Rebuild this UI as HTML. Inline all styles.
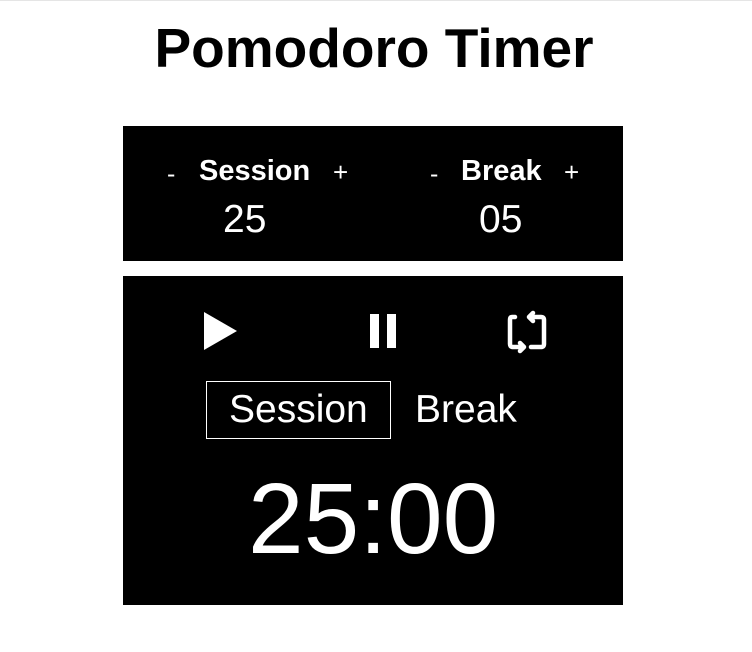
<!DOCTYPE html>
<html><head><meta charset="utf-8"><style>
body{margin:0;width:752px;height:652px;background:#fff;font-family:"Liberation Sans",Arial,sans-serif;position:relative;overflow:hidden}
.a{position:absolute;white-space:nowrap;line-height:1}
.box{position:absolute;background:#000;left:123px;width:500px}
.w{color:#fff}
</style></head><body>
<div style="position:absolute;top:0;left:0;width:752px;height:1px;background:#e5e5e5"></div>
<div class="a" style="left:0;width:748px;text-align:center;top:21px;font-size:55px;font-weight:bold">Pomodoro Timer</div>
<div class="box" style="top:126px;height:135px"></div>
<div class="box" style="top:276px;height:329px"></div>
<div class="a w" style="left:167px;top:162px;font-size:25px">-</div>
<div class="a w" style="left:199px;top:157px;font-size:29px;font-weight:bold">Session</div>
<div class="a w" style="left:333px;top:159px;font-size:26px">+</div>
<div class="a w" style="left:223px;top:200px;font-size:39px">25</div>
<div class="a w" style="left:430px;top:162px;font-size:25px">-</div>
<div class="a w" style="left:461px;top:157px;font-size:29px;font-weight:bold">Break</div>
<div class="a w" style="left:564px;top:159px;font-size:26px">+</div>
<div class="a w" style="left:479px;top:200px;font-size:39px">05</div>
<svg style="position:absolute;left:0;top:0" width="752" height="652">
<polygon points="204,312 237,331 204,350" fill="#fff"/>
<rect x="370" y="314" width="9" height="34" fill="#fff"/>
<rect x="387" y="314" width="9" height="34" fill="#fff"/>
<g fill="none" stroke="#fff" stroke-width="4.5" stroke-linecap="round" stroke-linejoin="round">
<path d="M515 317 H512 Q510 317 510 320 V344 Q510 347 513 347 H522"/>
<path d="M520 343 L524 347 L520 351"/>
<path d="M531 317 H541 Q544 317 544 320 V344 Q544 347 541 347 H531"/>
<path d="M533 313 L529 317 L533 321"/>
</g>
<rect x="206.5" y="381.5" width="184" height="57" fill="none" stroke="#fff" stroke-width="1"/>
</svg>
<div class="a w" style="left:229px;top:390px;font-size:39px">Session</div>
<div class="a w" style="left:415px;top:390px;font-size:39px">Break</div>
<div class="a w" style="left:248px;top:469px;font-size:100px">25:00</div>
</body></html>
